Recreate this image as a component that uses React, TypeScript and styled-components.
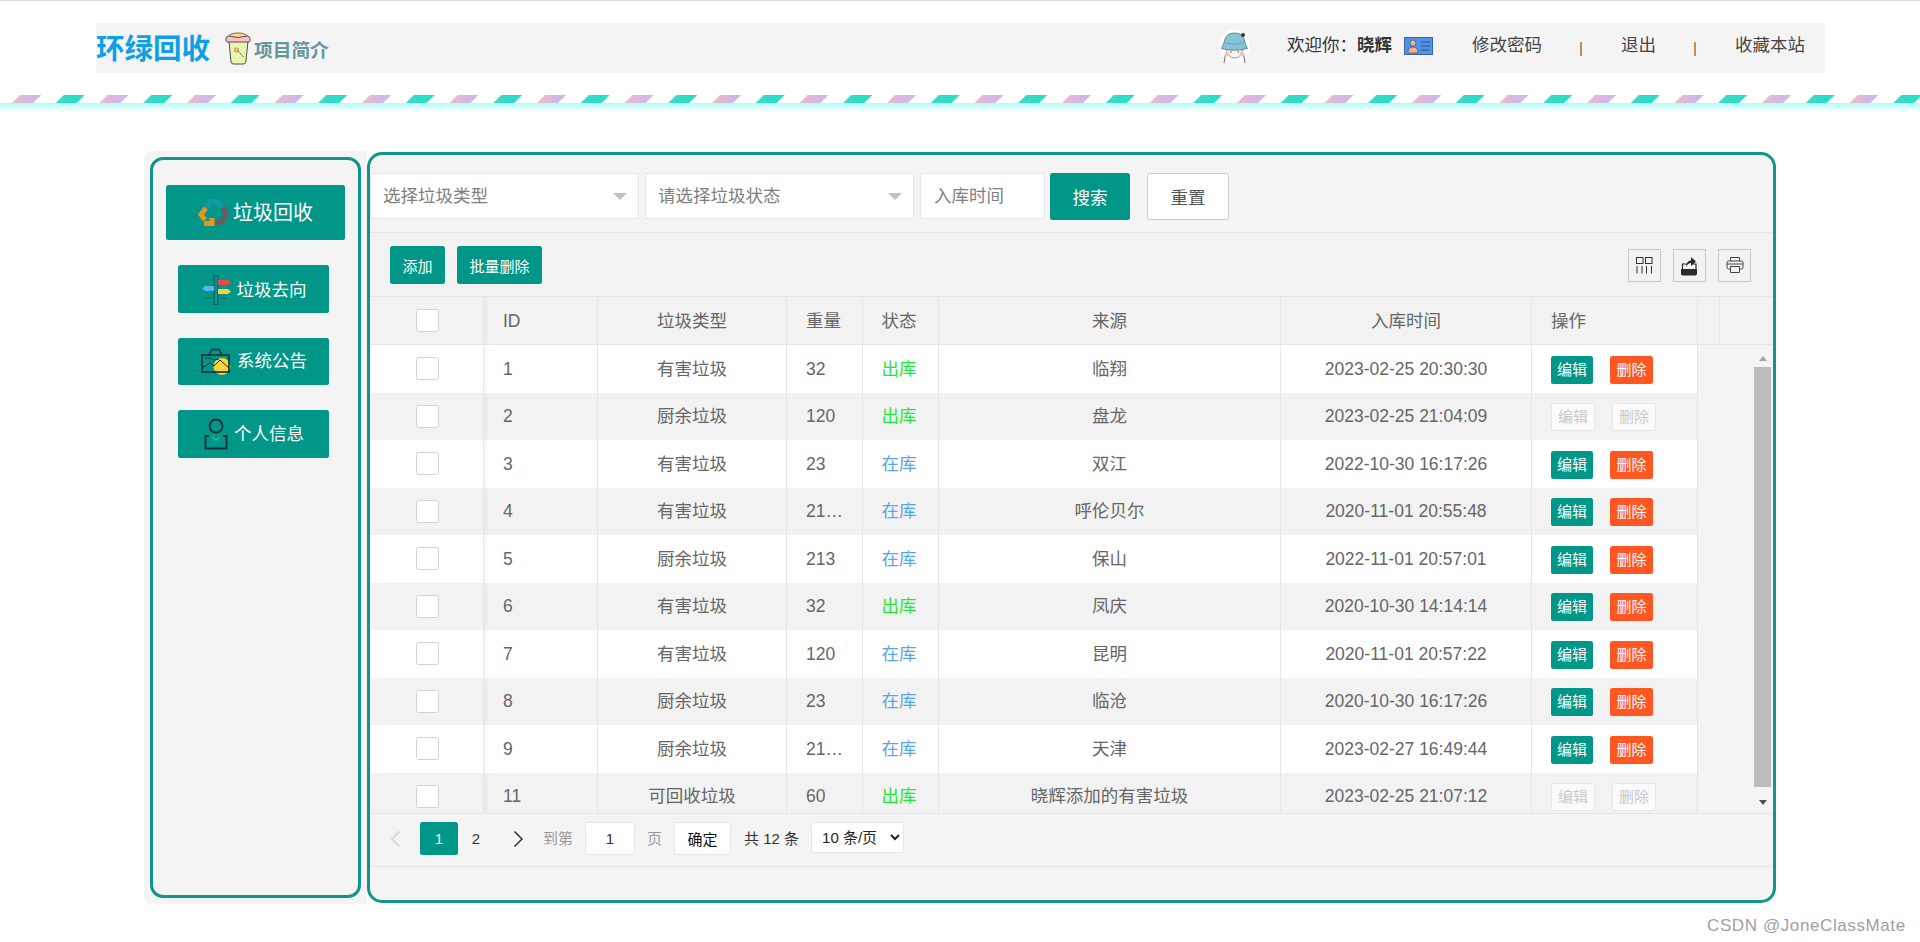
import React from "react";
import styled, { createGlobalStyle } from "styled-components";

const Global = createGlobalStyle`
  html, body { margin: 0; padding: 0; background: #fff; overflow: hidden; height: 942px; }
  * { box-sizing: border-box; }
  body { font-family: "Liberation Sans", "Noto Sans CJK SC", sans-serif; font-size: 17.5px; color: #666; }
`;

const Page = styled.div`
  position: relative;
  width: 1920px;
  height: 942px;
  border-top: 1px solid #ddd;
`;

const Header = styled.header`
  margin: 22px 95px 0 96px;
  height: 50px;
  background: #f4f4f4;
  display: flex;
  align-items: center;
  justify-content: space-between;
`;
const Brand = styled.div`display: flex; align-items: center;`;
const Title = styled.div`
  font-size: 28.5px;
  font-weight: 700;
  color: #0f9fe6;
  margin-right: 15px;
  line-height: 50px;
  padding-top: 1px;
`;
const Intro = styled.div`
  font-size: 18.7px;
  font-weight: 700;
  color: #63979a;
  margin-left: 3px;
`;
const UserBar = styled.div`
  display: flex;
  align-items: center;
  padding-right: 20px;
  color: #333;
  margin-top: -4px;
`;
const Welcome = styled.span`
  margin-left: 37px;
  margin-bottom: 6px;
  white-space: nowrap;
  color: #333;
`;
const UserName = styled.b`color: #333;`;
const NavLink = styled.a<{ $left: number }>`
  margin-left: ${(p) => p.$left}px;
  margin-bottom: 6px;
  color: #444;
  white-space: nowrap;
`;
const Sep = styled.span`
  margin-left: 37px;
  font-size: 15px;
  color: #6f6a3f;
  width: 4px;
  padding-top: 3px;
`;

const StripeBar = styled.svg`display: block; margin-top: 22px; width: 1920px; height: 8px;`;
const Glow = styled.div`
  height: 9px;
  background: linear-gradient(#aefdf8, #ffffff);
`;

const Main = styled.main`
  display: flex;
  align-items: flex-start;
  margin: 39px 0 0 144px;
`;
const SideShell = styled.aside`
  width: 223px;
  height: 753px;
  background: #f4f4f4;
  border-radius: 8px 0 0 8px;
  padding: 6px 6px 6px 6px;
`;
const SideBox = styled.nav`
  width: 211px;
  height: 741px;
  border: 3px solid #0f958a;
  border-radius: 13px;
  padding: 25px 0 0 13px;
  display: flex;
  flex-direction: column;
  align-items: flex-start;
  gap: 25px;
`;
const MenuButton = styled.a<{ $primary?: boolean; $h: number }>`
  display: flex;
  align-items: center;
  justify-content: center;
  gap: ${(p) => (p.$primary ? 4 : 6)}px;
  padding-left: ${(p) => (p.$primary ? 0 : 1)}px;
  height: ${(p) => p.$h}px;
  width: ${(p) => (p.$primary ? 179 : 151)}px;
  margin-left: ${(p) => (p.$primary ? 0 : 12)}px;
  background: #009688;
  color: #fff;
  border-radius: 2.5px;
  font-size: ${(p) => (p.$primary ? 20 : 17.5)}px;
`;
const MenuText = styled.span<{ $up: number }>`
  margin-bottom: ${(p) => p.$up}px;
`;

const Panel = styled.section`
  width: 1409px;
  height: 751px;
  margin-top: 1px;
  border: 3px solid #0f958a;
  border-radius: 15px;
  background: #f4f4f4;
  overflow: hidden;
`;
const SearchRow = styled.div`
  height: 78px;
  padding-top: 18px;
  border-bottom: 1px solid #e6e6e6;
  display: flex;
  align-items: flex-start;
`;
const SelectBox = styled.div<{ $w: number }>`
  position: relative;
  width: ${(p) => p.$w}px;
  height: 46px;
  margin-right: 6px;
  padding-left: 12px;
  line-height: 44px;
  background: #fff;
  border: 1px solid #e6e6e6;
  color: #7f7f7f;
  white-space: nowrap;
  &::after {
    content: "";
    position: absolute;
    right: 11px;
    top: 19px;
    border: 7px solid transparent;
    border-top: 7px solid #c2c2c2;
    border-bottom: 0;
  }
`;
const DateBox = styled.div`
  width: 125px;
  height: 46px;
  padding-left: 13px;
  line-height: 44px;
  background: #fff;
  border: 1px solid #e6e6e6;
  color: #7f7f7f;
  margin-right: 5px;
`;
const SearchButton = styled.button`
  width: 80px;
  height: 47px;
  background: #009688;
  border: 0;
  border-radius: 2.5px;
  color: #fff;
  font: inherit;
  font-size: 17.5px;
`;
const ResetButton = styled.button`
  width: 82px;
  height: 47px;
  margin-left: 17px;
  background: #fff;
  border: 1px solid #c9c9c9;
  border-radius: 2.5px;
  color: #555;
  font: inherit;
  font-size: 17.5px;
`;

const Toolbar = styled.div`
  height: 63px;
  background: #f2f2f2;
  padding: 1px 22px 0 20px;
  display: flex;
  align-items: center;
  gap: 12px;
`;
const ToolButton = styled.button<{ $w: number }>`
  width: ${(p) => p.$w}px;
  height: 38px;
  background: #009688;
  border: 0;
  border-radius: 2.5px;
  color: #fff;
  font: inherit;
  font-size: 15px;
  padding: 0;
`;
const ToolSpacer = styled.div`flex: 1;`;
const IconBox = styled.div`
  width: 33px;
  height: 33px;
  border: 1px solid #c9c9c9;
  display: flex;
  align-items: center;
  justify-content: center;
`;

const COLS = "114px 114px 189px 76px 76px 342px 251px 166px";
const HeadRow = styled.div`
  display: grid;
  grid-template-columns: ${COLS} 22px 1fr;
  height: 49px;
  background: #f2f2f2;
  border-top: 1px solid #e6e6e6;
  border-bottom: 1px solid #e6e6e6;
`;
const Cell = styled.div<{ $left?: boolean; $fixed?: boolean }>`
  position: relative;
  display: flex;
  align-items: center;
  justify-content: ${(p) => (p.$left ? "flex-start" : "center")};
  padding: 0 ${(p) => (p.$left ? "19px" : "0")};
  border-right: 1px solid #e6e6e6;
  min-width: 0;
  color: #666;
  line-height: 22px;
  ${(p) =>
    p.$fixed &&
    "z-index: 1; padding-left: 2px; box-shadow: 2px 0 5px rgba(0,0,0,.06); clip-path: inset(0 -8px 0 0);"}
`;
const Clip = styled.span`
  overflow: hidden;
  white-space: nowrap;
`;
const Status = styled.span<{ $out?: boolean; $plain?: boolean }>`
  margin-right: 3px;
  color: ${(p) => (p.$plain ? "#666" : p.$out ? "#22e92c" : "#5aa5e2")};
`;
const BodyWrap = styled.div`
  height: 468px;
  display: flex;
  overflow: hidden;
`;
const Rows = styled.div`width: 1328px; flex: none;`;
const Row = styled.div<{ $alt: boolean }>`
  display: grid;
  grid-template-columns: ${COLS};
  height: 47.5px;
  background: ${(p) => (p.$alt ? "#f2f2f2" : "#fff")};
`;
const Check = styled.span`
  display: block;
  width: 23px;
  height: 23px;
  background: #fff;
  border: 1px solid #d2d2d2;
  border-radius: 2.5px;
`;
const RowButton = styled.span<{ $kind: "edit" | "del" | "off"; $w: number }>`
  display: inline-flex;
  align-items: center;
  justify-content: center;
  width: ${(p) => p.$w}px;
  height: 28px;
  margin-top: 2px;
  font-size: 15px;
  border-radius: 2.5px;
  margin-right: 17px;
  flex: none;
  color: ${(p) => (p.$kind === "off" ? "#c9c9c9" : "#fff")};
  background: ${(p) => (p.$kind === "edit" ? "#009688" : p.$kind === "del" ? "#ff5722" : "#fbfbfb")};
  border: ${(p) => (p.$kind === "off" ? "1px solid #e6e6e6" : "0")};
`;
const Scrollbar = styled.div`
  width: 17px;
  margin-left: auto;
  margin-right: 2px;
  padding-top: 5px;
  display: flex;
  flex-direction: column;
  align-items: center;
`;
const ScrollArrow = styled.div<{ $down?: boolean }>`
  height: 17px;
  width: 17px;
  flex: none;
  display: flex;
  align-items: center;
  justify-content: center;
  margin-top: ${(p) => (p.$down ? 7 : 0)}px;
  &::before {
    content: "";
    border-left: 4.5px solid transparent;
    border-right: 4.5px solid transparent;
    ${(p) =>
      p.$down ? "border-top: 5px solid #505050;" : "border-bottom: 5px solid #a3a3a3;"}
  }
`;
const ScrollThumb = styled.div`
  width: 17px;
  height: 420px;
  flex: none;
  background: #bcbcbc;
`;

const Footer = styled.div`
  height: 54px;
  border-top: 1px solid #e6e6e6;
  border-bottom: 1px solid #e6e6e6;
  padding-top: 8px;
  display: flex;
  align-items: flex-start;
  font-size: 15px;
`;
const PageArrow = styled.div<{ $w: number }>`
  width: ${(p) => p.$w}px;
  height: 33px;
  display: flex;
  align-items: center;
  justify-content: center;
`;
const PageNum = styled.div<{ $on?: boolean }>`
  width: ${(p) => (p.$on ? 38 : 36)}px;
  height: 33px;
  line-height: 33px;
  text-align: center;
  color: ${(p) => (p.$on ? "#fff" : "#333")};
  background: ${(p) => (p.$on ? "#009688" : "transparent")};
  border-radius: 2.5px;
`;
const FootText = styled.span<{ $left?: number; $dark?: boolean }>`
  line-height: 33px;
  margin-left: ${(p) => p.$left ?? 0}px;
  color: ${(p) => (p.$dark ? "#333" : "#999")};
  white-space: nowrap;
`;
const PageInput = styled.input`
  width: 50px;
  height: 33px;
  margin-left: 12px;
  padding: 0;
  border: 1px solid #e6e6e6;
  border-radius: 2.5px;
  background: #fff;
  text-align: center;
  color: #333;
  font: inherit;
`;
const OkButton = styled.button`
  width: 57px;
  height: 33px;
  margin-left: 12px;
  padding: 0;
  border: 1px solid #e6e6e6;
  border-radius: 2.5px;
  background: #fff;
  color: #111;
  font: inherit;
`;
const SizeSelect = styled.select`
  width: 93px;
  height: 31px;
  margin-left: 12px;
  padding: 0 0 0 6px;
  border: 1px solid #e6e6e6;
  border-radius: 2.5px;
  background-color: #fff;
  color: #222;
  font: inherit;
`;
const Watermark = styled.div`
  position: absolute;
  left: 1707px;
  top: 915px;
  font-size: 17px;
  letter-spacing: .6px;
  color: #a0a0a0;
  white-space: nowrap;
`;

const Chevron = ({ dir, color }: { dir: "l" | "r"; color: string }) => (
  <svg width="11" height="18" viewBox="0 0 11 18" fill="none">
    <path d={dir === "l" ? "M9.5 1.5 2 9l7.5 7.5" : "M1.5 1.5 9 9l-7.5 7.5"} stroke={color} strokeWidth="1.5" />
  </svg>
);

const Stripes = () => (
  <StripeBar viewBox="0 0 1920 8">
    <defs>
      <linearGradient id="gp"><stop offset="0" stopColor="#f0b8cc" /><stop offset="1" stopColor="#c6b8ee" /></linearGradient>
      <linearGradient id="gt"><stop offset="0" stopColor="#45d6c8" /><stop offset="1" stopColor="#1fe0c6" /></linearGradient>
      <pattern id="st" width="87.5" height="8" patternUnits="userSpaceOnUse">
        <polygon points="12,8 20,0 41,0 33,8" fill="url(#gp)" />
        <polygon points="55.7,8 63.7,0 84.7,0 76.7,8" fill="url(#gt)" />
      </pattern>
    </defs>
    <rect width="1920" height="8" fill="url(#st)" />
  </StripeBar>
);

const CupIcon = () => (
  <svg width="26" height="33" viewBox="0 0 26 33">
    <path d="M4 9 6 30q.3 2 2.5 2h10q2 0 2.3-2L23 9z" fill="#e6f7ae" stroke="#5b4a45" strokeWidth="1" />
    <ellipse cx="13" cy="4.5" rx="9.5" ry="3.5" fill="#fbd98a" stroke="#5b4a45" strokeWidth=".8" />
    <path d="M1 6.5q0-2 2.5-2.5 9.500 3 19 0Q25 4.500 25 6.500v2q0 1.500-2 1.500H3q-2 0-2-1.500z" fill="#f9bfd3" stroke="#5b4a45" strokeWidth="1" />
    <path d="M13 19l6 6.500" stroke="#4a3a35" strokeWidth="1" strokeDasharray="2 1" />
    <circle cx="11.500" cy="18" r="2.200" fill="#f6c45c" stroke="#b86a5a" strokeWidth=".6" />
  </svg>
);
const Avatar = () => (
  <svg width="31" height="33" viewBox="0 0 31 33">
    <ellipse cx="15.500" cy="16.500" rx="15" ry="16.500" fill="#fff" />
    <path d="M5 33l1.500-9q1-2 2.500-1M26 33l-1.500-9q-1-2-2.500-1" fill="none" stroke="#6b5f5a" strokeWidth=".9" />
    <path d="M7 17q1 11 8.500 11T24 17z" fill="#fdf6f0" stroke="#7a6d68" strokeWidth=".7" />
    <path d="M2.500 18.500Q5 14 6 9q2-6 9.500-6Q23 3 25 9q1 5 3.500 9.500-13 3.500-26 0z" fill="#86c3d8" stroke="#54707e" strokeWidth=".8" />
    <path d="M6.500 13q9 3 18 0" fill="none" stroke="#5f9db2" strokeWidth=".8" />
    <circle cx="24" cy="5" r="2" fill="#3a3030" />
    <circle cx="8" cy="24" r="2.200" fill="#f4c5c0" />
    <circle cx="23" cy="24" r="2.200" fill="#f4c5c0" />
    <path d="M11 22h1.500M18.500 22H20" stroke="#333" strokeWidth="1" />
  </svg>
);
const CardIcon = () => (
  <svg width="29" height="18" viewBox="0 0 29 18" style={{ marginLeft: 12 }}>
    <rect x=".5" y=".5" width="28" height="17" fill="#4f93e8" stroke="#3f5fb0" />
    <circle cx="9" cy="6" r="3" fill="#f3b188" stroke="#33408a" strokeWidth=".6" />
    <path d="M4 16q0-6 5-6t5 6z" fill="#f3b188" stroke="#33408a" strokeWidth=".6" />
    <path d="M17 5h9M17 9h9M17 13h9" stroke="#2d4f9e" strokeWidth="1.200" />
  </svg>
);
const RecycleIcon = () => (
  <svg width="31" height="28" viewBox="0 0 31 28" fill="none">
    <path d="M8 8l4-5.500h7L23 8" stroke="#1399ad" strokeWidth="5" />
    <path d="M8 9 3 15.500 7 21" stroke="#ec9220" strokeWidth="5" />
    <path d="M6 24.500h8V19" stroke="#ec9220" strokeWidth="5" />
    <path d="M25 8l3.500 7-4 7-6.500 3" stroke="#6c5c60" strokeWidth="5" />
    <path d="M19 20v7" stroke="#6c5c60" strokeWidth="4" />
  </svg>
);
const SignIcon = () => (
  <svg width="29" height="31" viewBox="0 0 29 31" fill="none">
    <path d="M12 1.500h4v29h-4z" stroke="#0f5e60" strokeWidth="1.200" />
    <path d="M16 6h10l3 2.500L26 11H16z" fill="#ea4a4a" />
    <path d="M12 12H3l-3 2.500L3 17h9z" fill="#58b4ee" />
    <path d="M16 15h10l3 2.500L26 20H16z" fill="#f3cf4c" />
    <path d="M3 24h7M18 24h7M5 3l1 1M8 5l1 1" stroke="#0f5e60" strokeWidth="1" />
  </svg>
);
const PictureIcon = () => (
  <svg width="30" height="27" viewBox="0 0 30 27" fill="none">
    <circle cx="21" cy="18.500" r="8.500" fill="#fbd23f" />
    <path d="M8 7l3-5.500h7L21 7" stroke="#0b2f33" strokeWidth="1.300" />
    <rect x="1" y="7" width="27" height="17" stroke="#0b2f33" strokeWidth="1.600" />
    <path d="M1 20l8-5 4 3 6-6 9 8" stroke="#0b2f33" strokeWidth="1" />
    <path d="M4 10h6l2 2 6-1" stroke="#0b2f33" strokeWidth="1" />
  </svg>
);
const PersonIcon = () => (
  <svg width="24" height="32" viewBox="0 0 24 32" fill="none">
    <circle cx="12" cy="8" r="6.500" stroke="#0b2f33" strokeWidth="1.800" />
    <path d="M5 18H1.500v12.500h21V18H19" stroke="#0b2f33" strokeWidth="1.800" />
    <path d="M8 19l4 3 4-3" stroke="#22b876" strokeWidth="1.800" />
  </svg>
);
const ColsIcon = () => (
  <svg width="17" height="17" viewBox="0 0 17 17" fill="none" stroke="#333" strokeWidth="1">
    <rect x=".5" y=".5" width="6.500" height="6" />
    <rect x="9.500" y=".5" width="6.500" height="6" />
    <path d="M1 9v7.500M6 9v7.500M10.500 9v7.500M15.500 9v7.500" />
  </svg>
);
const ExportIcon = () => (
  <svg width="17" height="21" viewBox="0 0 17 21">
    <path d="M0 14h16v4.500q0 2-2 2H2q-2 0-2-2z" fill="#2b2b2b" />
    <path d="M1.500 14V9h4M11 9h4v5" stroke="#2b2b2b" fill="none" strokeWidth="1.200" />
    <path d="M5 12q0-6 5-6.500V2l5 4.500-5 4.500V8q-3 0-5 4z" fill="#2b2b2b" />
  </svg>
);
const PrintIcon = () => (
  <svg width="18" height="18" viewBox="0 0 18 18" fill="none" stroke="#444" strokeWidth="1">
    <path d="M4.500 5V1.500h9V5M4.500 13H2.500q-1.500 0-1.500-1.500v-5Q1 5 2.500 5h13Q17 5 17 6.500v5q0 1.500-1.500 1.500h-2" />
    <path d="M4.500 10.500h9v6h-9zM1 8h16" />
  </svg>
);

type R = [string, string, string, boolean, string, string, boolean?];
const data: R[] = [
  ["1", "有害垃圾", "32", true, "临翔", "2023-02-25 20:30:30"],
  ["2", "厨余垃圾", "120", true, "盘龙", "2023-02-25 21:04:09", true],
  ["3", "有害垃圾", "23", false, "双江", "2022-10-30 16:17:26"],
  ["4", "有害垃圾", "21…", false, "呼伦贝尔", "2020-11-01 20:55:48"],
  ["5", "厨余垃圾", "213", false, "保山", "2022-11-01 20:57:01"],
  ["6", "有害垃圾", "32", true, "凤庆", "2020-10-30 14:14:14"],
  ["7", "有害垃圾", "120", false, "昆明", "2020-11-01 20:57:22"],
  ["8", "厨余垃圾", "23", false, "临沧", "2020-10-30 16:17:26"],
  ["9", "厨余垃圾", "21…", false, "天津", "2023-02-27 16:49:44"],
  ["11", "可回收垃圾", "60", true, "晓辉添加的有害垃圾", "2023-02-25 21:07:12", true],
];

export default function App() {
  return (
    <Page>
      <Global />
      <Header>
        <Brand>
          <Title>环绿回收</Title>
          <CupIcon />
          <Intro>项目简介</Intro>
        </Brand>
        <UserBar>
          <Avatar />
          <Welcome>欢迎你：<UserName>晓辉</UserName></Welcome>
          <CardIcon />
          <NavLink $left={39}>修改密码</NavLink>
          <Sep>|</Sep>
          <NavLink $left={38}>退出</NavLink>
          <Sep>|</Sep>
          <NavLink $left={38}>收藏本站</NavLink>
        </UserBar>
      </Header>
      <Stripes />
      <Glow />
      <Main>
        <SideShell>
          <SideBox>
            <MenuButton $primary $h={55}><RecycleIcon /><MenuText $up={2}>垃圾回收</MenuText></MenuButton>
            <MenuButton $h={48}><SignIcon /><MenuText $up={2}>垃圾去向</MenuText></MenuButton>
            <MenuButton $h={47}><PictureIcon /><MenuText $up={4}>系统公告</MenuText></MenuButton>
            <MenuButton $h={48}><PersonIcon /><MenuText $up={4}>个人信息</MenuText></MenuButton>
          </SideBox>
        </SideShell>
        <Panel>
          <SearchRow>
            <SelectBox $w={269}>选择垃圾类型</SelectBox>
            <SelectBox $w={269}>请选择垃圾状态</SelectBox>
            <DateBox>入库时间</DateBox>
            <SearchButton>搜索</SearchButton>
            <ResetButton>重置</ResetButton>
          </SearchRow>
          <Toolbar>
            <ToolButton $w={55}>添加</ToolButton>
            <ToolButton $w={85}>批量删除</ToolButton>
            <ToolSpacer />
            <IconBox><ColsIcon /></IconBox>
            <IconBox><ExportIcon /></IconBox>
            <IconBox><PrintIcon /></IconBox>
          </Toolbar>
          <HeadRow>
            <Cell $fixed><Check /></Cell>
            <Cell $left>ID</Cell>
            <Cell>垃圾类型</Cell>
            <Cell $left>重量</Cell>
            <Cell><Status $plain>状态</Status></Cell>
            <Cell>来源</Cell>
            <Cell>入库时间</Cell>
            <Cell $left>操作</Cell>
            <Cell />
            <div />
          </HeadRow>
          <BodyWrap>
            <Rows>
              {data.map((r, i) => (
                <Row key={r[0]} $alt={i % 2 === 1}>
                  <Cell $fixed><Check /></Cell>
                  <Cell $left><Clip>{r[0]}</Clip></Cell>
                  <Cell><Clip>{r[1]}</Clip></Cell>
                  <Cell $left><Clip>{r[2]}</Clip></Cell>
                  <Cell><Status $out={r[3]}>{r[3] ? "出库" : "在库"}</Status></Cell>
                  <Cell><Clip>{r[4]}</Clip></Cell>
                  <Cell><Clip>{r[5]}</Clip></Cell>
                  <Cell $left>
                    {r[6] ? (
                      <>
                        <RowButton $kind="off" $w={44}>编辑</RowButton>
                        <RowButton $kind="off" $w={44}>删除</RowButton>
                      </>
                    ) : (
                      <>
                        <RowButton $kind="edit" $w={42}>编辑</RowButton>
                        <RowButton $kind="del" $w={43}>删除</RowButton>
                      </>
                    )}
                  </Cell>
                </Row>
              ))}
            </Rows>
            <Scrollbar>
              <ScrollArrow />
              <ScrollThumb />
              <ScrollArrow $down />
            </Scrollbar>
          </BodyWrap>
          <Footer>
            <PageArrow $w={50}><Chevron dir="l" color="#d2d2d2" /></PageArrow>
            <PageNum $on>1</PageNum>
            <PageNum>2</PageNum>
            <PageArrow $w={49}><Chevron dir="r" color="#333" /></PageArrow>
            <FootText>到第</FootText>
            <PageInput defaultValue="1" />
            <FootText $left={12}>页</FootText>
            <OkButton>确定</OkButton>
            <FootText $left={13} $dark>共 12 条</FootText>
            <SizeSelect defaultValue="10">
              <option value="10">10 条/页</option>
              <option value="20">20 条/页</option>
            </SizeSelect>
          </Footer>
        </Panel>
      </Main>
      <Watermark>CSDN @JoneClassMate</Watermark>
    </Page>
  );
}
